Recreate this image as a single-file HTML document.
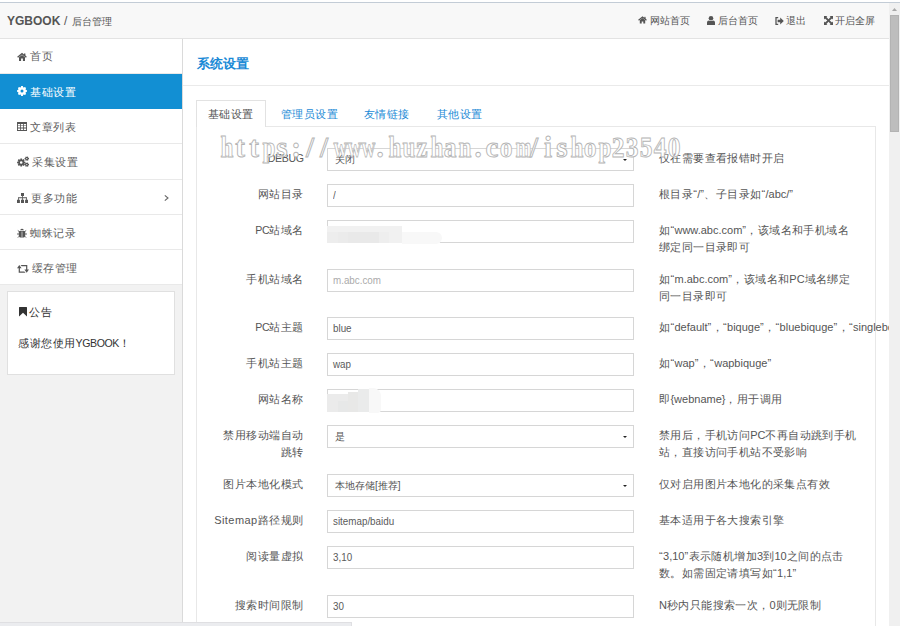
<!DOCTYPE html>
<html><head><meta charset="utf-8">
<style>
*{box-sizing:border-box;margin:0;padding:0}
html,body{width:900px;height:626px;overflow:hidden;background:#fff;font-family:"Liberation Sans",sans-serif;font-size:12px;color:#333}
.a{position:absolute;white-space:nowrap}
svg{position:absolute;overflow:visible}
#topline{left:0;top:2px;width:900px;height:1px;background:#c3ccd6}
#hdr{left:0;top:3px;width:889px;height:36px;background:#f8f8f8;border-bottom:1px solid #e3e3e3}
#logo{left:7px;top:14px;font-weight:bold;font-size:12px;color:#555}
.hl{position:absolute;top:14px;font-size:10px;color:#555;letter-spacing:0}
#side{left:0;top:39px;width:183px;height:587px;background:#f2f2f2;border-right:1px solid #dadada}
.it{position:absolute;left:0;width:182px;height:35px;background:#fff;border-bottom:1px solid #e9e9e9;color:#606060}
.it.act{background:#128fd3;color:#fff;border-bottom:none}
.it .t{position:absolute;left:30px;top:11px;font-size:11px;letter-spacing:.6px}
#ann{left:7px;top:291px;width:168px;height:84px;background:#fff;border:1px solid #e0e0e0;font-size:11px;letter-spacing:.5px;color:#333}
#ptitle{left:197px;top:55px;font-size:13px;font-weight:bold;color:#1b8ad6}
#phline{left:183px;top:85px;width:706px;height:1px;background:#eaeaea}
#tabbox{left:196px;top:126px;width:680px;height:520px;border:1px solid #e8e8e8}
#tabact{left:196px;top:100px;width:70px;height:27px;background:#fff;border:1px solid #e2e2e2;border-bottom:none}
.tab{position:absolute;top:107px;font-size:11px;letter-spacing:.45px;color:#1b8ad6;white-space:nowrap}
.lbl{position:absolute;font-size:11px;letter-spacing:.45px;color:#555;text-align:right;width:140px;left:163.5px;line-height:17px;white-space:nowrap}
.inp{position:absolute;left:327px;width:307px;height:23px;border:1px solid #d6d6d6;background:#fff;overflow:hidden}
.tv{position:absolute;left:5px;top:4px;font-size:10.5px;color:#5a5a5a;transform:scaleX(.935);transform-origin:0 0;white-space:nowrap}
.sv{position:absolute;left:7px;top:4px;font-size:10px;color:#555;white-space:nowrap}
.caret{position:absolute;left:294.5px;top:10px;width:0;height:0;border-left:2.6px solid transparent;border-right:2.6px solid transparent;border-top:2.6px solid #222}
.blur{position:absolute}
.lt{letter-spacing:0}
.uc{letter-spacing:-.4px;font-size:10.6px}
.hlp{position:absolute;left:659px;font-size:11px;letter-spacing:.4px;color:#555;line-height:17px;white-space:nowrap}
#vscroll{left:889px;top:3px;width:11px;height:623px;background:#f0f0f0}
#thumb{left:890px;top:15px;width:9px;height:117px;background:#bdbdbd;border:1px solid #b3b3b3}
#hscroll{left:0;top:622px;width:352px;height:4px;background:#ebecef;border-top:1px solid #dfdfe2;border-right:1px solid #dfdfe2}
#wm{left:219px;top:132px;width:470px;height:36px}
#wm span{position:absolute;top:0;width:14px;text-align:center;font-family:"Liberation Serif",serif;font-size:29px;line-height:30px;font-weight:bold;color:#fff;-webkit-text-stroke:.9px #b4b4b4}
#wm span.n{transform:scaleX(.66)}
#wm span.h{transform:scaleX(.8)}
#wm span.g{transform:scaleX(.88)}
</style></head><body>
<div class="a" id="topline"></div>
<div class="a" id="hdr"></div>
<div class="a" id="logo">YGBOOK</div>
<div class="a" style="left:64px;top:14px;font-size:12px;color:#555">/</div>
<div class="a" style="left:72px;top:15px;font-size:10px;color:#555">后台管理</div>

<!-- header right links -->
<svg style="left:638px;top:16px" width="9" height="8" viewBox="0 0 10 8"><path d="M0.6 4.3 L5 0.7 L9.4 4.3" stroke="#555" stroke-width="1.4" fill="none"/><rect x="7" y="0.5" width="1.4" height="2.4" fill="#555"/><path d="M2 4.2 L5 1.9 L8 4.2 V8 H5.9 V5.6 H4.1 V8 H2 Z" fill="#555"/></svg>
<span class="hl" style="left:650px">网站首页</span>
<svg style="left:707px;top:16px" width="8" height="9" viewBox="0 0 8 9"><circle cx="4" cy="2.3" r="2.3" fill="#555"/><path d="M0 9 V6.6 Q0 4.8 2 4.6 Q4 5.6 6 4.6 Q8 4.8 8 6.6 V9 Z" fill="#555"/></svg>
<span class="hl" style="left:718px">后台首页</span>
<svg style="left:775px;top:16.5px" width="9" height="8" viewBox="0 0 9 8"><path d="M3.2 0.7 H1 V7.3 H3.2" stroke="#555" stroke-width="1.3" fill="none"/><path d="M2.6 2.7 H5.2 V0.6 L8.8 4 L5.2 7.4 V5.3 H2.6 Z" fill="#555"/></svg>
<span class="hl" style="left:786px">退出</span>
<svg style="left:824px;top:16px" width="9" height="9" viewBox="0 0 9 9"><path d="M0 0 H3.4 L2.4 1 L4.5 3.3 L6.6 1 L5.6 0 H9 V3.4 L8 2.4 L5.7 4.5 L8 6.6 L9 5.6 V9 H5.6 L6.6 8 L4.5 5.7 L2.4 8 L3.4 9 H0 V5.6 L1 6.6 L3.3 4.5 L1 2.4 L0 3.4 Z" fill="#555"/></svg>
<span class="hl" style="left:835px">开启全屏</span>

<div class="a" id="side">
  <div class="it" style="top:0">
    <svg style="left:17px;top:13.5px" width="10" height="8" viewBox="0 0 10 8"><path d="M0.6 4.3 L5 0.7 L9.4 4.3" stroke="#555" stroke-width="1.4" fill="none"/><rect x="7" y="0.5" width="1.4" height="2.4" fill="#555"/><path d="M2 4.2 L5 1.9 L8 4.2 V8 H5.9 V5.6 H4.1 V8 H2 Z" fill="#555"/></svg>
    <span class="t" style="top:10px">首页</span></div>
  <div class="it act" style="top:35px">
    <svg style="left:17px;top:12px" width="10" height="10" viewBox="0 0 10 10"><path fill="#fff" fill-rule="evenodd" d="M8.82 3.82 L9.93 4.18 L9.93 5.82 L8.82 6.18 L8.54 6.87 L9.07 7.91 L7.91 9.07 L6.87 8.54 L6.18 8.82 L5.82 9.93 L4.18 9.93 L3.82 8.82 L3.13 8.54 L2.09 9.07 L0.93 7.91 L1.46 6.87 L1.18 6.18 L0.07 5.82 L0.07 4.18 L1.18 3.82 L1.46 3.13 L0.93 2.09 L2.09 0.93 L3.13 1.46 L3.82 1.18 L4.18 0.07 L5.82 0.07 L6.18 1.18 L6.87 1.46 L7.91 0.93 L9.07 2.09 L8.54 3.13 Z M5 3.4 A1.5 1.6 0 1 0 5 6.6 A1.5 1.6 0 1 0 5 3.4 Z"/></svg>
    <span class="t">基础设置</span></div>
  <div class="it" style="top:70px">
    <svg style="left:17px;top:12.5px" width="10" height="9" viewBox="0 0 10 9"><path fill="#555" fill-rule="evenodd" d="M0 0.3 Q0 0 0.3 0 H9.7 Q10 0 10 0.3 V9 H0 Z M0.9 2.1 H3.1 V3.4 H0.9 Z M3.9 2.1 H6.1 V3.4 H3.9 Z M6.9 2.1 H9.1 V3.4 H6.9 Z M0.9 4.1 H3.1 V5.4 H0.9 Z M3.9 4.1 H6.1 V5.4 H3.9 Z M6.9 4.1 H9.1 V5.4 H6.9 Z M0.9 6.6 H3.1 V7.9 H0.9 Z M3.9 6.6 H6.1 V7.9 H3.9 Z M6.9 6.6 H9.1 V7.9 H6.9 Z"/></svg>
    <span class="t">文章列表</span></div>
  <div class="it" style="top:105px;height:36px">
    <svg style="left:17px;top:11.5px" width="12" height="11" viewBox="0 0 12 11"><path fill="#555" fill-rule="evenodd" d="M7.04 5.53 L8.32 5.68 L8.32 7.32 L7.04 7.47 L6.89 7.82 L7.69 8.83 L6.53 9.99 L5.52 9.19 L5.17 9.34 L5.02 10.62 L3.38 10.62 L3.23 9.34 L2.88 9.19 L1.87 9.99 L0.71 8.83 L1.51 7.82 L1.36 7.47 L0.08 7.32 L0.08 5.68 L1.36 5.53 L1.51 5.18 L0.71 4.17 L1.87 3.01 L2.88 3.81 L3.23 3.66 L3.38 2.38 L5.02 2.38 L5.17 3.66 L5.52 3.81 L6.53 3.01 L7.69 4.17 L6.89 5.18 Z M4.2 5.2 A1.3 1.3 0 1 0 4.2 7.8 A1.3 1.3 0 1 0 4.2 5.2 Z M11.25 1.92 L12.02 2.00 L12.02 3.20 L11.25 3.28 L11.11 3.51 L11.43 4.23 L10.40 4.82 L9.93 4.19 L9.67 4.19 L9.20 4.82 L8.17 4.23 L8.49 3.51 L8.35 3.28 L7.58 3.20 L7.58 2.00 L8.35 1.92 L8.49 1.69 L8.17 0.97 L9.20 0.38 L9.67 1.01 L9.93 1.01 L10.40 0.38 L11.43 0.97 L11.11 1.69 Z M9.8 2 A0.6 0.6 0 1 0 9.8 3.2 A0.6 0.6 0 1 0 9.8 2 Z M11.25 7.92 L12.02 8.00 L12.02 9.20 L11.25 9.28 L11.11 9.51 L11.43 10.23 L10.40 10.82 L9.93 10.19 L9.67 10.19 L9.20 10.82 L8.17 10.23 L8.49 9.51 L8.35 9.28 L7.58 9.20 L7.58 8.00 L8.35 7.92 L8.49 7.69 L8.17 6.97 L9.20 6.38 L9.67 7.01 L9.93 7.01 L10.40 6.38 L11.43 6.97 L11.11 7.69 Z M9.8 8 A0.6 0.6 0 1 0 9.8 9.2 A0.6 0.6 0 1 0 9.8 8 Z"/></svg>
    <span class="t" style="left:32px">采集设置</span></div>
  <div class="it" style="top:141px">
    <svg style="left:17px;top:13px" width="11" height="10" viewBox="0 0 11 10"><path fill="#555" d="M4 0 H7 V3 H5.9 V4.3 H10 V6.8 H9.2 V5.2 H5.9 V6.8 H5.1 V5.2 H1.8 V6.8 H1 V4.3 H5.1 V3 H4 Z M0 6.8 H2.9 V10 H0 Z M4 6.8 H7 V10 H4 Z M8.1 6.8 H11 V10 H8.1 Z"/></svg>
    <span class="t" style="left:31px">更多功能</span>
    <svg style="left:164px;top:15px" width="5" height="6" viewBox="0 0 5 6"><path d="M0.8 0.4 L4 3 L0.8 5.6" stroke="#666" stroke-width="1.1" fill="none"/></svg></div>
  <div class="it" style="top:176px">
    <svg style="left:17px;top:13px" width="10" height="10" viewBox="0 0 10 10"><path fill="#555" d="M3 2.2 Q5 -0.6 7 2.2 Z M2.5 3 H7.5 Q8.2 3 8.2 4 V8 Q8.2 9.6 5.3 9.8 V3.6 H4.7 V9.8 Q1.8 9.6 1.8 8 V4 Q1.8 3 2.5 3 Z"/><path d="M0 6 H2 M8 6 H10 M0.8 2.5 L2.3 3.6 M9.2 2.5 L7.7 3.6 M0.9 9.6 L2.2 8.2 M9.1 9.6 L7.8 8.2" stroke="#555" stroke-width="0.9"/></svg>
    <span class="t">蜘蛛记录</span></div>
  <div class="it" style="top:211px">
    <svg style="left:17px;top:14.5px" width="12" height="8" viewBox="0 0 12 8"><path fill="#555" d="M0 3.3 L2.3 0 L4.6 3.3 H2.9 V6.5 H7.3 L8.5 7.8 H1.7 V3.3 Z M12 4.5 L9.7 7.8 L7.4 4.5 H9.1 V1.3 H4.7 L3.5 0 H10.3 V4.5 Z"/></svg>
    <span class="t" style="left:31.5px">缓存管理</span></div>
</div>
<div class="a" id="ann">
  <svg style="left:11px;top:15px" width="8" height="9.5" viewBox="0 0 8 9.5"><path fill="#333" d="M0 0.4 Q0 0 0.4 0 H7.6 Q8 0 8 0.4 V9.5 L4 5.8 L0 9.5 Z"/></svg>
  <span style="position:absolute;left:21px;top:13px">公告</span>
  <span style="position:absolute;left:10px;top:44px">感谢您使用<span class="uc">YGBOOK</span>！</span>
</div>

<div class="a" id="ptitle">系统设置</div>
<div class="a" id="phline"></div>
<div class="a" id="tabbox"></div>
<div class="a" id="tabact"></div>
<span class="tab" style="left:208px;color:#555">基础设置</span>
<span class="tab" style="left:281px">管理员设置</span>
<span class="tab" style="left:364px">友情链接</span>
<span class="tab" style="left:437px">其他设置</span>

<div class="lbl" style="top:150px"><span class="uc">DEBUG</span></div>
<div class="inp" style="top:148px"><span class="sv">关闭</span><span class="caret"></span></div>
<div class="hlp" style="top:150px">仅在需要查看报错时开启</div>
<div class="lbl" style="top:186px">网站目录</div>
<div class="inp" style="top:184px"><span class="tv">/</span></div>
<div class="hlp" style="top:186px">根目录“<span class="lt">/</span>”、子目录如“<span class="lt">/abc/</span>”</div>
<div class="lbl" style="top:222px"><span class="uc">PC</span>站域名</div>
<div class="inp" style="top:220px;overflow:visible"><div class="blur" style="left:-1px;top:5px;width:75px;height:17px;background:#f1f1f1"></div><div class="blur" style="left:-1px;top:11px;width:11px;height:11px;background:#ededed"></div><div class="blur" style="left:10px;top:11px;width:10px;height:11px;background:#ebebeb"></div><div class="blur" style="left:20px;top:11px;width:31px;height:11px;background:#e9e9e9"></div><div class="blur" style="left:51px;top:11px;width:10px;height:11px;background:#eeeeee"></div><div class="blur" style="left:61px;top:11px;width:13px;height:11px;background:#f1f1f1"></div><div class="blur" style="left:74px;top:11px;width:40px;height:12px;background:#f8f8f8;border-radius:0 6px 6px 0"></div></div>
<div class="hlp" style="top:222px">如“<span class="lt">www.abc.com</span>”，该域名和手机域名<br>绑定同一目录即可</div>
<div class="lbl" style="top:271px">手机站域名</div>
<div class="inp" style="top:269px"><span class="tv" style="color:#aaa">m.abc.com</span></div>
<div class="hlp" style="top:271px">如“<span class="lt">m.abc.com</span>”，该域名和<span class="lt">PC</span>域名绑定<br>同一目录即可</div>
<div class="lbl" style="top:319px"><span class="uc">PC</span>站主题</div>
<div class="inp" style="top:317px"><span class="tv">blue</span></div>
<div class="hlp" style="top:319px">如“<span class="lt">default</span>”，“<span class="lt">biquge</span>”，“<span class="lt">bluebiquge</span>”，“<span class="lt">singlebook</span>”</div>
<div class="lbl" style="top:355px">手机站主题</div>
<div class="inp" style="top:353px"><span class="tv">wap</span></div>
<div class="hlp" style="top:355px">如“<span class="lt">wap</span>”，“<span class="lt">wapbiquge</span>”</div>
<div class="lbl" style="top:391px">网站名称</div>
<div class="inp" style="top:389px;overflow:visible"><div class="blur" style="left:-1px;top:4px;width:42px;height:18px;background:#ebebeb"></div><div class="blur" style="left:10px;top:11px;width:11px;height:11px;background:#e7e8e8"></div><div class="blur" style="left:20px;top:2px;width:11px;height:20px;background:#e8e8e7"></div><div class="blur" style="left:30px;top:-1px;width:11px;height:23px;background:#eaebeb"></div><div class="blur" style="left:41px;top:-2px;width:12px;height:25px;background:#f8f8f8;border-radius:0 8px 4px 0"></div></div>
<div class="hlp" style="top:391px">即<span class="lt">{webname}</span>，用于调用</div>
<div class="lbl" style="top:427px">禁用移动端自动<br>跳转</div>
<div class="inp" style="top:425px"><span class="sv">是</span><span class="caret"></span></div>
<div class="hlp" style="top:427px">禁用后，手机访问<span class="lt">PC</span>不再自动跳到手机<br>站，直接访问手机站不受影响</div>
<div class="lbl" style="top:476px">图片本地化模式</div>
<div class="inp" style="top:474px"><span class="sv">本地存储[推荐]</span><span class="caret"></span></div>
<div class="hlp" style="top:476px">仅对启用图片本地化的采集点有效</div>
<div class="lbl" style="top:512px">Sitemap路径规则</div>
<div class="inp" style="top:510px"><span class="tv">sitemap/baidu</span></div>
<div class="hlp" style="top:512px">基本适用于各大搜索引擎</div>
<div class="lbl" style="top:548px">阅读量虚拟</div>
<div class="inp" style="top:546px"><span class="tv">3,10</span></div>
<div class="hlp" style="top:548px">“<span class="lt">3,10</span>”表示随机增加<span class="lt">3</span>到<span class="lt">10</span>之间的点击<br>数。如需固定请填写如“<span class="lt">1,1</span>”</div>
<div class="lbl" style="top:597px">搜索时间限制</div>
<div class="inp" style="top:595px"><span class="tv">30</span></div>
<div class="hlp" style="top:597px"><span class="lt">N</span>秒内只能搜索一次，<span class="lt">0</span>则无限制</div>

<div class="a" id="wm"><span class="h" style="left:0px">h</span><span style="left:14px">t</span><span style="left:28px">t</span><span class="h" style="left:42px">p</span><span style="left:56px">s</span><span style="left:70px">:</span><span style="left:84px">/</span><span style="left:98px">/</span><span class="n" style="left:112px">w</span><span class="n" style="left:126px">w</span><span class="n" style="left:140px">w</span><span style="left:154px">.</span><span class="h" style="left:168px">h</span><span class="h" style="left:182px">u</span><span class="g" style="left:196px">z</span><span class="h" style="left:210px">h</span><span class="g" style="left:224px">a</span><span class="h" style="left:238px">n</span><span style="left:252px">.</span><span style="left:266px">c</span><span class="g" style="left:280px">o</span><span class="n" style="left:294px">m</span><span style="left:308px">/</span><span style="left:322px">i</span><span style="left:336px">s</span><span class="h" style="left:350px">h</span><span class="g" style="left:364px">o</span><span class="h" style="left:378px">p</span><span class="g" style="left:392px">2</span><span class="g" style="left:406px">3</span><span class="g" style="left:420px">5</span><span class="g" style="left:434px">4</span><span class="g" style="left:448px">0</span></div>

<div class="a" id="vscroll"></div>
<svg style="left:892px;top:8px" width="5" height="3" viewBox="0 0 5 3"><path d="M0 3 L2.5 0 L5 3 Z" fill="#a8a8a8"/></svg>
<div class="a" id="thumb"></div>
<div class="a" id="hscroll"></div>
</body></html>
